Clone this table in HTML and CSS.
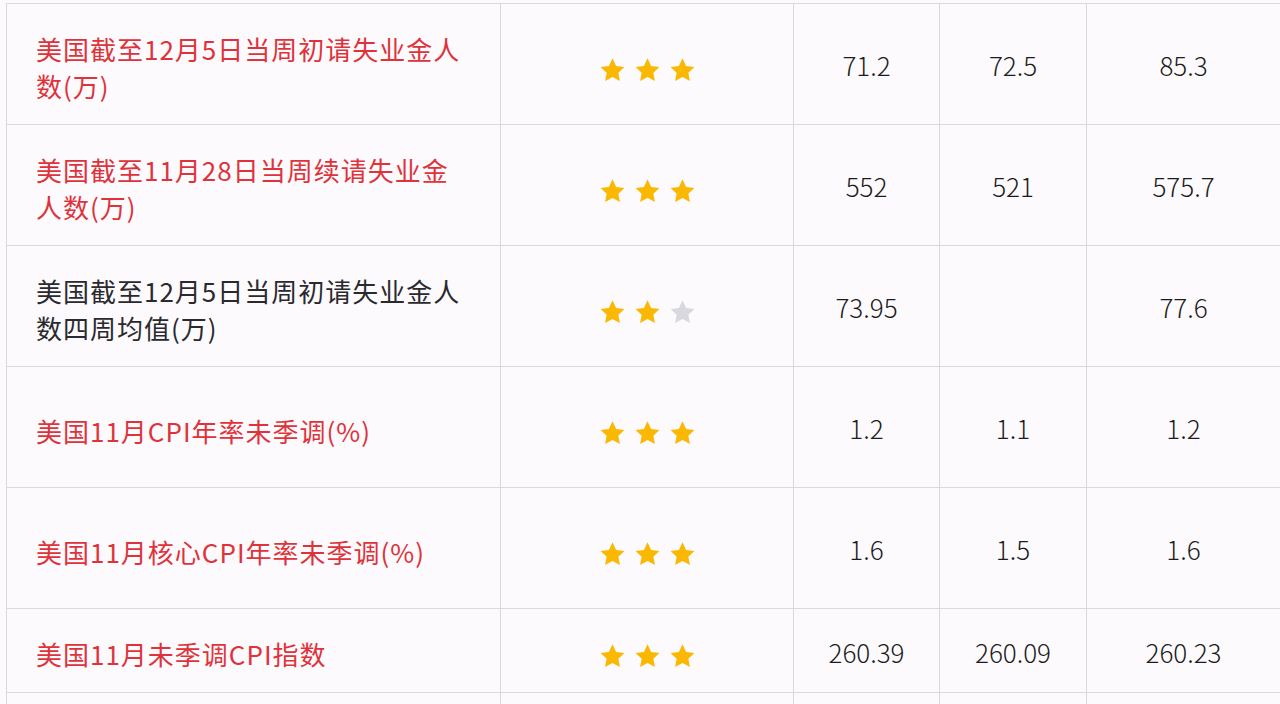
FILE: index.html
```html
<!DOCTYPE html>
<html lang="zh-CN">
<head>
<meta charset="utf-8">
<title>经济数据</title>
<link rel="stylesheet" href="styles.css">
</head>
<body>
<svg width="0" height="0" class="defs">
  <defs>
    <symbol id="star" viewBox="0 0 24 24">
      <path d="M12 1.2l3.2 6.8 7.4.9-5.4 5.1 1.4 7.4L12 17.7l-6.6 3.7 1.4-7.4-5.4-5.1 7.4-.9z"/>
    </symbol>
  </defs>
</svg>
<div class="table">
  <div class="row">
    <div class="cell name red">美国截至12月5日当周初请失业金人数(万)</div>
    <div class="cell stars"><svg class="star on"><use href="#star"/></svg><svg class="star on"><use href="#star"/></svg><svg class="star on"><use href="#star"/></svg></div>
    <div class="cell num">71.2</div>
    <div class="cell num">72.5</div>
    <div class="cell num">85.3</div>
  </div>
  <div class="row">
    <div class="cell name red">美国截至11月28日当周续请失业金人数(万)</div>
    <div class="cell stars"><svg class="star on"><use href="#star"/></svg><svg class="star on"><use href="#star"/></svg><svg class="star on"><use href="#star"/></svg></div>
    <div class="cell num">552</div>
    <div class="cell num">521</div>
    <div class="cell num">575.7</div>
  </div>
  <div class="row">
    <div class="cell name">美国截至12月5日当周初请失业金人数四周均值(万)</div>
    <div class="cell stars"><svg class="star on"><use href="#star"/></svg><svg class="star on"><use href="#star"/></svg><svg class="star off"><use href="#star"/></svg></div>
    <div class="cell num">73.95</div>
    <div class="cell num"></div>
    <div class="cell num">77.6</div>
  </div>
  <div class="row">
    <div class="cell name red">美国11月CPI年率未季调(%)</div>
    <div class="cell stars"><svg class="star on"><use href="#star"/></svg><svg class="star on"><use href="#star"/></svg><svg class="star on"><use href="#star"/></svg></div>
    <div class="cell num">1.2</div>
    <div class="cell num">1.1</div>
    <div class="cell num">1.2</div>
  </div>
  <div class="row">
    <div class="cell name red">美国11月核心CPI年率未季调(%)</div>
    <div class="cell stars"><svg class="star on"><use href="#star"/></svg><svg class="star on"><use href="#star"/></svg><svg class="star on"><use href="#star"/></svg></div>
    <div class="cell num">1.6</div>
    <div class="cell num">1.5</div>
    <div class="cell num">1.6</div>
  </div>
  <div class="row short">
    <div class="cell name red">美国11月未季调CPI指数</div>
    <div class="cell stars"><svg class="star on"><use href="#star"/></svg><svg class="star on"><use href="#star"/></svg><svg class="star on"><use href="#star"/></svg></div>
    <div class="cell num">260.39</div>
    <div class="cell num">260.09</div>
    <div class="cell num">260.23</div>
  </div>
  <div class="row tail">
    <div class="cell"></div>
    <div class="cell"></div>
    <div class="cell"></div>
    <div class="cell"></div>
    <div class="cell"></div>
  </div>
</div>
</body>
</html>
```

FILE: styles.css
```css
html, body {
  margin: 0;
  padding: 0;
  background: #fcfafd;
  overflow: hidden;
}

body {
  font-family: "Noto Sans CJK SC", "Noto Sans", sans-serif;
  color: #333;
}

.defs {
  position: absolute;
  width: 0;
  height: 0;
}

.table {
  margin: 3px 0 0 6px;
  border-left: 1px solid #d9d8df;
  border-top: 1px solid #d9d8df;
  width: 1274px;
}

.row {
  display: grid;
  grid-template-columns: 494px 293px 146px 147px 194px;
  height: 121px;
}

.row.short {
  height: 84px;
}

.row.tail {
  height: 40px;
}

.cell {
  box-sizing: border-box;
  border-right: 1px solid #d9d8df;
  border-bottom: 1px solid #d9d8df;
  display: flex;
  align-items: center;
  padding-top: 6px;
}

.name {
  padding-left: 29px;
  padding-right: 28px;
  font-size: 26px;
  letter-spacing: 1px;
  line-height: 37px;
  color: #2a2a2e;
}

.name.red {
  color: #de333b;
}

.stars {
  justify-content: center;
  gap: 8px;
  padding-top: 12px;
}

.star {
  width: 27px;
  height: 27px;
}

.star.on {
  fill: #fbb802;
}

.star.off {
  fill: #d9d8de;
}

.num {
  justify-content: center;
  font-size: 26px;
  font-weight: 300;
  color: #1c1c20;
  padding-top: 1px;
}
```
